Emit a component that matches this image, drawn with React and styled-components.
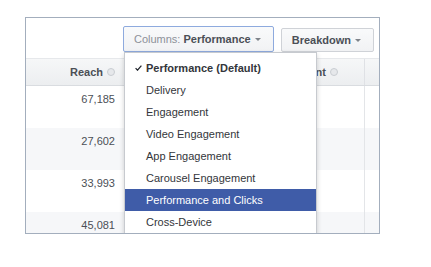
import React from "react";
import styled, { createGlobalStyle } from "styled-components";

const GlobalStyle = createGlobalStyle`
  html, body { margin: 0; padding: 0; background: #ffffff; }
  body { font-family: "Liberation Sans", Arial, Helvetica, sans-serif; }
  * { box-sizing: border-box; }
`;

const Page = styled.div`
  padding: 17px 0 0 25px;
`;

const Frame = styled.div`
  width: 355px;
  height: 217px;
  border: 1px solid #a3aebd;
  overflow: hidden;
  display: flex;
  flex-direction: column;
  background: #fff;
`;

const Toolbar = styled.div`
  height: 40px;
  flex: none;
  display: flex;
  justify-content: flex-end;
  align-items: flex-end;
  gap: 7px;
  padding: 0 5px 6px 0;
`;

const MenuAnchor = styled.div`
  position: relative;
`;

const Button = styled.button`
  height: ${(p) => (p.$active ? 26 : 24)}px;
  padding: 0 12px 0 10px;
  display: flex;
  align-items: center;
  gap: 4px;
  background: linear-gradient(#f9fafb, #f1f2f4);
  border: 1px solid ${(p) => (p.$active ? "#8eaade" : "#cfd2d7")};
  border-radius: 2px;
  font-family: "Liberation Sans", Arial, sans-serif;
  font-size: 11px;
  color: #4b4f56;
  font-weight: bold;
  cursor: pointer;
`;

const Muted = styled.span`
  color: #8d9199;
  font-weight: normal;
  margin-right: 3px;
`;

const Caret = styled.span`
  width: 0;
  height: 0;
  border-left: 3px solid transparent;
  border-right: 3px solid transparent;
  border-top: 3px solid #7f838a;
  margin-top: 1px;
`;

const Menu = styled.ul`
  position: absolute;
  top: 100%;
  left: 1px;
  width: 193px;
  margin: 0;
  padding: 4px 0 6px;
  list-style: none;
  background: #fff;
  border: 1px solid #c7cacf;
  box-shadow: 0 2px 5px rgba(0, 0, 0, 0.18);
  z-index: 5;
`;

const Item = styled.li`
  height: 22px;
  display: flex;
  align-items: center;
  padding-left: 10px;
  font-size: 11px;
  color: ${(p) => (p.$hover ? "#ffffff" : "#33363b")};
  background: ${(p) => (p.$hover ? "#3f5ca8" : "transparent")};
  font-weight: ${(p) => (p.$selected ? "bold" : "normal")};
  white-space: nowrap;
`;

const CheckSlot = styled.span`
  width: 11px;
  flex: none;
  display: flex;
  align-items: center;
`;

const HeaderRow = styled.div`
  height: 28px;
  flex: none;
  display: grid;
  grid-template-columns: 97px 241px 1fr;
  background: linear-gradient(#f6f7f8, #eceef0);
  border-top: 1px solid #e6e8eb;
  border-bottom: 1px solid #d9dce0;
`;

const HeaderCell = styled.div`
  display: flex;
  align-items: center;
  justify-content: flex-end;
  padding-right: ${(p) => p.$pr || 8}px;
  font-size: 11px;
  font-weight: bold;
  color: #4b4f56;
  border-left: ${(p) => (p.$divider ? "1px solid #dfe1e5" : "none")};
  white-space: nowrap;
`;

const InfoIcon = styled.span`
  display: inline-block;
  width: 8px;
  height: 8px;
  margin-left: 4px;
  border-radius: 50%;
  border: 1.5px solid #c9cdd2;
  background: #e6e8eb;
`;

const Row = styled.div`
  height: 42px;
  flex: none;
  display: grid;
  grid-template-columns: 97px 241px 1fr;
  background: ${(p) => (p.$striped ? "#f6f7f9" : "#ffffff")};
`;

const Cell = styled.div`
  padding: 6px 8px 0 0;
  text-align: right;
  font-size: 11px;
  line-height: 14px;
  color: #4b4f56;
  border-left: ${(p) => (p.$divider ? "1px solid #e3e5e8" : "none")};
`;

const Check = () => (
  <svg width="7" height="6" viewBox="0 0 7 6">
    <path d="M0.6 3.2 L2.5 5.2 L6.4 0.6" fill="none" stroke="#1d2129" strokeWidth="1.2" />
  </svg>
);

const items = [
  "Performance (Default)",
  "Delivery",
  "Engagement",
  "Video Engagement",
  "App Engagement",
  "Carousel Engagement",
  "Performance and Clicks",
  "Cross-Device",
];

const reach = ["67,185", "27,602", "33,993", "45,081"];

export default function App() {
  return (
    <>
      <GlobalStyle />
      <Page>
        <Frame>
          <Toolbar>
            <MenuAnchor>
              <Button $active>
                <span>
                  <Muted>Columns:</Muted>Performance
                </span>
                <Caret />
              </Button>
              <Menu>
                {items.map((label, i) => (
                  <Item key={label} $selected={i === 0} $hover={i === 6}>
                    <CheckSlot>{i === 0 && <Check />}</CheckSlot>
                    {label}
                  </Item>
                ))}
              </Menu>
            </MenuAnchor>
            <Button>
              Breakdown
              <Caret />
            </Button>
          </Toolbar>
          <HeaderRow>
            <HeaderCell>
              Reach<InfoIcon />
            </HeaderCell>
            <HeaderCell $pr={26}>
              Amount Spent<InfoIcon />
            </HeaderCell>
            <HeaderCell $divider />
          </HeaderRow>
          {reach.map((v, i) => (
            <Row key={v} $striped={i % 2 === 1}>
              <Cell>{v}</Cell>
              <Cell />
              <Cell $divider />
            </Row>
          ))}
        </Frame>
      </Page>
    </>
  );
}
